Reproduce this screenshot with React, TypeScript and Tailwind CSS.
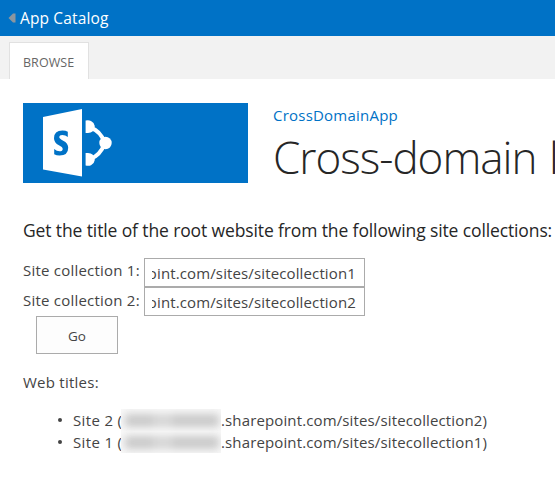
const results = ['2', '1'];

function Logo() {
  return (
    <svg width="225" height="80" viewBox="0 0 225 80" className="block shrink-0">
      <rect width="225" height="80" fill="#0072c6" />
      <path d="M20 14 L59 6 V73.500 L20 66.500 Z" fill="#fff" />
      <path d="M44.800 28.800 V33.900 Q42.500 32.100 39.300 32.100 Q36.300 32.100 36.300 34.300 Q36.300 35.800 40.200 37.700 Q45.200 40.100 45.200 44.800 Q45.200 52.500 36.600 52.500 Q33.400 52.500 31.200 51.200 V46.100 Q33.700 48.300 36.600 48.300 Q39.700 48.300 39.700 45.900 Q39.700 44.200 35.900 42.300 Q31 39.900 31 35.200 Q31 27.500 39.400 27.500 Q42.800 27.500 44.800 28.800 Z" fill="#0072c6" />
      <path d="M68 25 Q77 27.500 82 40 Q77 52.500 68 55.500" fill="none" stroke="#fff" strokeWidth="4" />
      <path d="M62.600 17.600 Q65.500 16.800 68 18 Q71.300 19.600 71.800 23 Q72 26.500 69.500 28.500 Q68 29.900 65 29.900 H62.600 Z M62.600 50 H65 Q68 50 69.500 51.500 Q72 53.500 71.800 57 Q71.300 60.500 68 62.300 Q65.500 63.300 62.600 62.400 Z" fill="#fff" />
      <circle cx="82.500" cy="40" r="6.200" fill="#fff" />
    </svg>
  );
}

function Field({ n, gap }: { n: string; gap: string }) {
  return (
    <div className="flex h-[29px]">
      <div className={`w-[121px] text-[15px] leading-[20px] tracking-[0.220px] ${gap}`}>Site collection {n}:</div>
      <div className="flex h-[29px] w-[221px] justify-end border border-[#ababab] bg-white pr-[8px]">
        <div className="flex w-[204px] justify-end overflow-hidden whitespace-nowrap text-[15px] leading-[29px] tracking-[0.130px]">
          <span>point.com/sites/sitecollection{n}</span>
        </div>
      </div>
    </div>
  );
}

export default function App() {
  return (
    <div className="h-[485px] w-[555px] overflow-hidden whitespace-nowrap bg-white font-['Open_Sans','Noto_Sans',sans-serif] text-[#444]">
      <header className="flex h-[36px] items-center bg-[#0072c6] pl-[8px] text-white">
        <svg width="8" height="10" viewBox="0 0 8 10" className="mr-[4px]"><path d="M0.500 5 L5 0.500 H7.500 V9.500 H5 Z" fill="#8b969f" /></svg>
        <span className="text-[15.500px] leading-[35px] tracking-[0.140px]">App Catalog</span>
      </header>
      <nav className="flex h-[43px] items-end bg-[#f2f2f2] pl-[9px]">
        <div className="h-[37px] w-[80px] border border-b-0 border-[#e1e1e1] bg-white pl-[13px] text-[12.500px] leading-[39px] tracking-[0.050px] text-[#666]">BROWSE</div>
      </nav>
      <div className="flex h-[138px] pl-[23px] pt-[24px]">
        <Logo />
        <div className="pl-[25px]">
          <div className="text-[15px] leading-[24px] tracking-[0.220px] text-[#0072c6]">CrossDomainApp</div>
          <h1 className="text-[44px] font-light leading-[60px] tracking-[-1px] text-[#262626] [word-spacing:2px]">Cross-domain library</h1>
        </div>
      </div>
      <main className="pl-[23px]">
        <h2 className="h-[41px] text-[17.500px] leading-[26px] tracking-[-0.120px] text-[#262626]">Get the title of the root website from the following site collections:</h2>
        <Field n="1" gap="pt-[2px]" />
        <Field n="2" gap="pt-[3px]" />
        <button className="ml-[13px] block h-[38px] w-[82px] border border-[#ababab] bg-[#fdfdfd] text-[13.500px] leading-[38px]">Go</button>
        <div className="mt-[17px] text-[15px] leading-[22px] tracking-[0.250px]">Web titles:</div>
        <ul className="mt-[16px] text-[15px] leading-[22px] tracking-[0.130px]">
          {results.map((n) => (
            <li key={n} className="flex h-[22px] items-center">
              <span className="ml-[35px] mr-[11px] h-[4px] w-[4px] rounded-full bg-[#444]" />
              <span className="w-[48px] tracking-[0.350px]">Site {n} (</span>
              <span className="relative h-[22px] w-[100px] overflow-hidden bg-[#f9f9f9]">
                <span className="absolute left-[4px] top-[5px] flex h-[13px] w-[94px] blur-[4px]">
                  <span className="w-[28px] bg-[#c8c8c8]" />
                  <span className="w-[20px] bg-[#d4d4d4]" />
                  <span className="w-[46px] bg-[#c8c8c8]" />
                </span>
              </span>
              <span>.sharepoint.com/sites/sitecollection{n})</span>
            </li>
          ))}
        </ul>
      </main>
    </div>
  );
}
